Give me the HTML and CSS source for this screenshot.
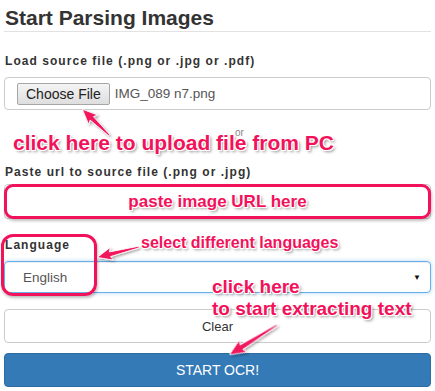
FILE: index.html
```html
<!DOCTYPE html>
<html lang="en">
<head>
    <meta charset="utf-8">
    <title>Start Parsing Images</title>
    <link rel="stylesheet" href="styles.css">
</head>
<body>
    <div class="page">
        <h2 class="title">Start Parsing Images</h2>

        <div class="form-group group-file">
            <label class="field-label">Load source file (.png or .jpg or .pdf)</label>
            <div class="file-box">
                <button class="choose-button">Choose File</button>
                <span class="file-name">IMG_089 n7.png</span>
            </div>
        </div>

        <div class="form-group group-url">
            <label class="field-label label-url">Paste url to source file (.png or .jpg)</label>
            <div class="url-wrap">
                <div class="url-input"></div>
                <div class="mark-box url-mark">paste image URL here</div>
            </div>
        </div>

        <div class="form-group group-lang">
            <label class="field-label">Language</label>
            <div class="select-box">
                <span>English</span>
                <span class="caret">&#9660;</span>
            </div>
        </div>

        <button class="btn btn-clear">Clear</button>
        <button class="btn btn-ocr">START OCR!</button>

        <!-- annotations drawn over the form -->
        <span class="small-or">or</span>
        <div class="note note-upload">click here to upload file from PC</div>
        <div class="mark-box lang-mark"></div>
        <div class="note note-lang">select different languages</div>
        <div class="note note-ocr">click here<br>to start extracting text</div>

        <svg class="arrows" width="435" height="391" viewBox="0 0 435 391">
            <defs>
                <filter id="shade" x="-50%" y="-50%" width="200%" height="200%">
                    <feDropShadow dx="1.5" dy="1.5" stdDeviation="1" flood-color="#000" flood-opacity="0.35"/>
                </filter>
            </defs>
            <g fill="#f2125c" stroke="#fff" stroke-width="0.8" filter="url(#shade)">
                <path transform="translate(109 135) rotate(-136)" d="M0 -0.8 L24 -2.4 L22 -6.5 L37 0 L22 6.5 L24 2.4 L0 0.8 Z"/>
                <path transform="translate(139 247) rotate(166)" d="M0 -0.8 L30 -2.4 L28 -6.5 L43 0 L28 6.5 L30 2.4 L0 0.8 Z"/>
                <path transform="translate(277 325) rotate(148)" d="M0 -0.8 L42 -2.6 L40 -7 L56 0 L40 7 L42 2.6 L0 0.8 Z"/>
            </g>
        </svg>
    </div>
</body>
</html>
```

FILE: styles.css
```css
:root {
    --text-color: #333;
    --muted: #555;
    --border: #ccc;
    --pink: #f2125c;
    --blue: #337ab7;
    --note-shadow: -1px -1px 0 #fff, 1px -1px 0 #fff, -1px 1px 0 #fff, 1px 1px 0 #fff, 2px 2px 3px rgba(0, 0, 0, 0.45);
}

* {
    box-sizing: border-box;
    margin: 0;
    padding: 0;
}

body {
    font-family: "Liberation Sans", Arial, sans-serif;
    color: var(--text-color);
    background: #fff;
}

.page {
    position: relative;
    width: 435px;
    height: 391px;
    padding: 0 4px;
    overflow: hidden;
}

.title {
    margin-top: 6px;
    padding-left: 1px;
    padding-bottom: 2px;
    font-size: 21px;
    line-height: 23px;
    font-weight: bold;
    border-bottom: 1px solid #e2e2e2;
}

.field-label {
    display: block;
    padding-left: 1px;
    font-size: 12px;
    line-height: 17px;
    font-weight: bold;
    letter-spacing: 1.05px;
    margin-bottom: 7px;
}

.group-file {
    margin-top: 21px;
}

.file-box {
    display: flex;
    align-items: center;
    gap: 5px;
    height: 33px;
    padding: 0 12px;
    border: 1px solid var(--border);
    border-radius: 4px;
}

.choose-button {
    height: 22px;
    padding: 0 8px;
    font-family: inherit;
    font-size: 14px;
    color: #222;
    background: linear-gradient(#f4f4f4, #dedede);
    border: 1px solid #a6a6a6;
    border-radius: 2px;
}

.file-name {
    font-size: 13.5px;
    color: var(--muted);
}

.group-url {
    margin-top: 54px;
}

.label-url {
    margin-bottom: 3px;
}

.url-wrap {
    position: relative;
    height: 35px;
}

.url-input {
    height: 35px;
    border: 1px solid var(--border);
    border-radius: 4px;
}

.mark-box {
    position: absolute;
    border: 3.5px solid var(--pink);
    border-radius: 9px;
    box-shadow: 1px 2px 3px rgba(0, 0, 0, 0.25);
}

.url-mark {
    inset: 0;
    display: flex;
    align-items: center;
    justify-content: center;
    font-size: 17px;
    font-weight: bold;
    color: var(--pink);
    text-shadow: var(--note-shadow);
}

.group-lang {
    margin-top: 18px;
}

.select-box {
    display: flex;
    align-items: center;
    justify-content: space-between;
    height: 32px;
    padding: 0 9px 0 18px;
    font-size: 13.5px;
    color: var(--muted);
    border: 1px solid #66afe9;
    border-radius: 4px;
    box-shadow: inset 0 1px 1px rgba(0, 0, 0, 0.075), 0 0 4px rgba(102, 175, 233, 0.5);
}

.caret {
    font-size: 8px;
    color: #111;
}

.btn {
    display: block;
    width: 100%;
    height: 34px;
    font-family: inherit;
    border-radius: 4px;
}

.btn-clear {
    margin-top: 16px;
    font-size: 13px;
    color: var(--text-color);
    background: #fff;
    border: 1px solid var(--border);
}

.btn-ocr {
    margin-top: 10px;
    font-size: 14px;
    color: #fff;
    background: var(--blue);
    border: 1px solid #2e6da4;
}

.small-or {
    position: absolute;
    left: 235px;
    top: 127px;
    font-size: 10px;
    color: #888;
}

.note {
    position: absolute;
    font-weight: bold;
    color: var(--pink);
    text-shadow: var(--note-shadow);
    white-space: nowrap;
}

.note-upload {
    left: 13px;
    top: 132px;
    font-size: 21px;
    line-height: 21px;
}

.lang-mark {
    left: 1px;
    top: 234px;
    width: 96px;
    height: 62px;
    border-radius: 12px;
}

.note-lang {
    left: 141px;
    top: 235px;
    font-size: 16px;
    line-height: 16px;
}

.note-ocr {
    left: 212px;
    top: 276px;
    font-size: 19px;
    line-height: 21.5px;
}

.arrows {
    position: absolute;
    left: 0;
    top: 0;
    pointer-events: none;
}
```
